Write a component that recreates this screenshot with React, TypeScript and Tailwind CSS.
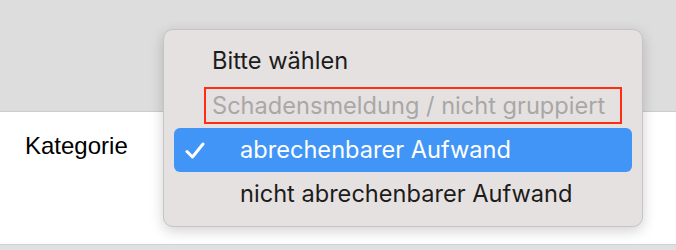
export default function App() {
  return (
    <div className="relative w-[676px] h-[250px] overflow-hidden bg-[#e2e2e2] font-['Inter','Noto_Sans',sans-serif]">
      {/* page behind the popup */}
      <div className="h-[112px] bg-[#dddddd] border-b border-[#c9cdd1]" />
      <div className="h-[133px] bg-white border-b border-[#cfd2d6] pl-[25px] pt-[16px]">
        <span className="font-['Liberation_Sans',Arial,sans-serif] text-[24px] text-black">Kategorie</span>
      </div>
      <div className="h-[4px] bg-[#e0e0e0]" />

      {/* select popup */}
      <div className="absolute left-[163px] top-[29px] w-[480px] h-[198px] rounded-[10px] bg-[#e6e1e1] border border-[#c7c3c3] shadow-[0_4px_14px_rgba(0,0,0,0.18)] px-[10px] pt-[9px] text-[23.6px] leading-none">
        <div className="h-[44px] flex items-center pl-[38px] text-[#1c1c1c]">Bitte wählen</div>
        <div className="h-[45px] flex items-center pl-[30px]">
          <div className="w-[418px] h-[37px] border-2 border-[#ff2d14] flex items-center pl-[6px] text-[#a9a7a7]">
            Schadensmeldung / nicht gruppiert
          </div>
        </div>
        <div className="h-[44px] flex items-center rounded-[6px] bg-[#4195f7] text-white">
          <svg width="20" height="17" viewBox="0 0 20 17" className="ml-[11px]" fill="none">
            <path d="M2 9.5 L7.5 15 L18 2" stroke="white" strokeWidth="3" strokeLinecap="round" strokeLinejoin="round" />
          </svg>
          <span className="ml-[35px]">abrechenbarer Aufwand</span>
        </div>
        <div className="h-[44px] flex items-center pl-[66px] text-[#1c1c1c]">nicht abrechenbarer Aufwand</div>
      </div>
    </div>
  );
}
